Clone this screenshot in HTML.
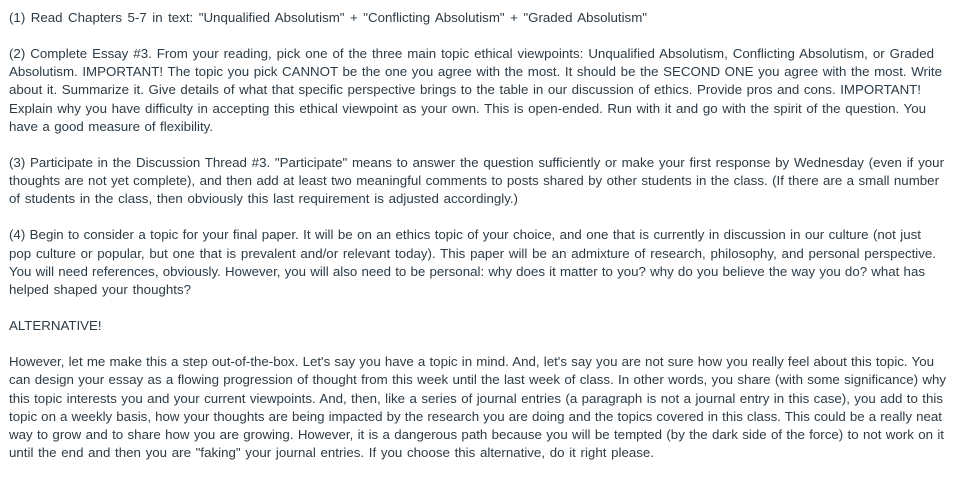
<!DOCTYPE html>
<html><head><meta charset="utf-8"><style>
html,body{margin:0;padding:0;background:#fff;width:956px;height:478px;overflow:hidden}
body{font-family:"Liberation Sans",sans-serif;font-size:13.3px;line-height:18.12px;color:#2d3b45}
.w{position:absolute;left:9px;top:9px}
p{margin:0 0 18.12px 0;white-space:nowrap}
p span{display:block;text-align:justify;text-align-last:justify}
</style></head><body><div class="w">
<p><span style="width:638px">(1) Read Chapters 5-7 in text: "Unqualified Absolutism" + "Conflicting Absolutism" + "Graded Absolutism"</span></p>
<p><span style="width:925px">(2) Complete Essay #3. From your reading, pick one of the three main topic ethical viewpoints: Unqualified Absolutism, Conflicting Absolutism, or Graded</span><span style="width:933px">Absolutism. IMPORTANT! The topic you pick CANNOT be the one you agree with the most. It should be the SECOND ONE you agree with the most. Write</span><span style="width:912px">about it. Summarize it. Give details of what that specific perspective brings to the table in our discussion of ethics. Provide pros and cons. IMPORTANT!</span><span style="width:917px">Explain why you have difficulty in accepting this ethical viewpoint as your own. This is open-ended. Run with it and go with the spirit of the question. You</span><span style="width:204px">have a good measure of flexibility.</span></p>
<p><span style="width:935px">(3) Participate in the Discussion Thread #3. "Participate" means to answer the question sufficiently or make your first response by Wednesday (even if your</span><span style="width:930px">thoughts are not yet complete), and then add at least two meaningful comments to posts shared by other students in the class. (If there are a small number</span><span style="width:509px">of students in the class, then obviously this last requirement is adjusted accordingly.)</span></p>
<p><span style="width:912px">(4) Begin to consider a topic for your final paper. It will be on an ethics topic of your choice, and one that is currently in discussion in our culture (not just</span><span style="width:927px">pop culture or popular, but one that is prevalent and/or relevant today). This paper will be an admixture of research, philosophy, and personal perspective.</span><span style="width:916px">You will need references, obviously. However, you will also need to be personal: why does it matter to you? why do you believe the way you do? what has</span><span style="width:182px">helped shaped your thoughts?</span></p>
<p>ALTERNATIVE!</p>
<p><span style="width:925px">However, let me make this a step out-of-the-box. Let's say you have a topic in mind. And, let's say you are not sure how you really feel about this topic. You</span><span style="width:937px">can design your essay as a flowing progression of thought from this week until the last week of class. In other words, you share (with some significance) why</span><span style="width:934px">this topic interests you and your current viewpoints. And, then, like a series of journal entries (a paragraph is not a journal entry in this case), you add to this</span><span style="width:933px">topic on a weekly basis, how your thoughts are being impacted by the research you are doing and the topics covered in this class. This could be a really neat</span><span style="width:935px">way to grow and to share how you are growing. However, it is a dangerous path because you will be tempted (by the dark side of the force) to not work on it</span><span style="width:645px">until the end and then you are "faking" your journal entries. If you choose this alternative, do it right please.</span></p>
</div></body></html>
